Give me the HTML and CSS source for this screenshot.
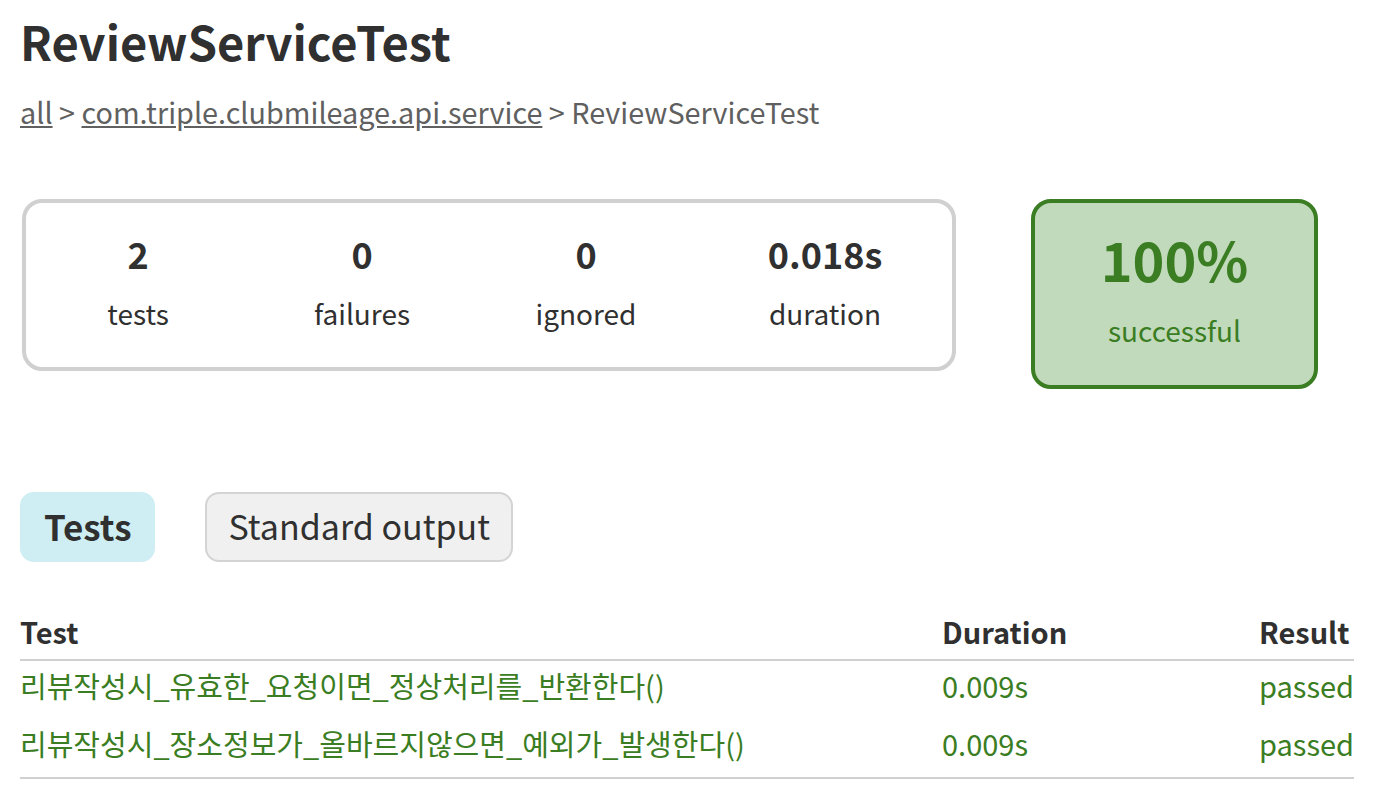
FILE: index.html
```html
<!DOCTYPE html>
<html lang="en">
<head>
<meta charset="utf-8">
<title>Test results - ReviewServiceTest</title>
<link rel="stylesheet" href="styles.css">
</head>
<body>
<div class="content">
  <h1 class="title">ReviewServiceTest</h1>
  <div class="breadcrumbs">
    <a href="#">all</a> &gt; <a href="#">com.triple.clubmileage.api.service</a> &gt; ReviewServiceTest
  </div>

  <div class="summary">
    <div class="summary-group">
      <div class="info-box info-tests">
        <div class="counter">2</div>
        <p class="label">tests</p>
      </div>
      <div class="info-box info-failures">
        <div class="counter">0</div>
        <p class="label">failures</p>
      </div>
      <div class="info-box info-ignored">
        <div class="counter">0</div>
        <p class="label">ignored</p>
      </div>
      <div class="info-box info-duration">
        <div class="counter">0.018s</div>
        <p class="label">duration</p>
      </div>
    </div>
    <div class="success-rate">
      <div class="percent">100%</div>
      <p class="label">successful</p>
    </div>
  </div>

  <ul class="tab-links">
    <li class="tab selected"><a href="#">Tests</a></li>
    <li class="tab"><a href="#">Standard output</a></li>
  </ul>

  <table class="tests-table">
    <colgroup>
      <col class="c-test">
      <col class="c-duration">
      <col class="c-result">
    </colgroup>
    <thead>
      <tr>
        <th class="col-test">Test</th>
        <th class="col-duration">Duration</th>
        <th class="col-result">Result</th>
      </tr>
    </thead>
    <tbody>
      <tr class="success">
        <td class="col-test name">리뷰작성시_유효한_요청이면_정상처리를_반환한다()</td>
        <td class="col-duration">0.009s</td>
        <td class="col-result">passed</td>
      </tr>
      <tr class="success">
        <td class="col-test name">리뷰작성시_장소정보가_올바르지않으면_예외가_발생한다()</td>
        <td class="col-duration">0.009s</td>
        <td class="col-result">passed</td>
      </tr>
    </tbody>
  </table>
</div>
</body>
</html>
```

FILE: styles.css
```css
html, body {
  margin: 0;
  padding: 0;
  background: #ffffff;
}

body {
  font-family: "Noto Sans CJK KR", "Noto Sans", sans-serif;
  font-size: 29px;
  color: #303030;
}

a, a:visited {
  color: #303030;
}

.content {
  padding: 0 20px;
}

.title {
  margin: 0;
  padding-top: 9px;
  font-size: 47px;
  line-height: 64px;
  font-weight: bold;
  white-space: nowrap;
}

.breadcrumbs {
  margin-top: 19px;
  line-height: 40px;
  font-size: 28.8px;
  color: #606060;
  white-space: nowrap;
}

.breadcrumbs a {
  color: #606060;
}

/* summary */
.summary {
  display: flex;
  align-items: flex-start;
  margin-top: 67px;
  margin-left: 2px;
}

.summary-group {
  display: flex;
  border: 4px solid #d0d0d0;
  border-radius: 20px;
  width: 934px;
  box-sizing: border-box;
}

.info-box {
  padding: 30px 0 32px;
  text-align: center;
  box-sizing: border-box;
}

.info-tests, .info-failures, .info-ignored {
  width: 224px;
}

.info-duration {
  width: 254px;
}

.counter {
  font-size: 36px;
  font-weight: bold;
  line-height: 40px;
  margin-bottom: 18px;
}

.label {
  margin: 0;
  font-size: 28px;
  line-height: 44px;
}

.success-rate {
  margin-left: 75px;
  width: 287px;
  height: 190px;
  box-sizing: border-box;
  border: 4px solid #3a7d22;
  border-radius: 20px;
  background: #c2dabc;
  color: #3a7d22;
  text-align: center;
  padding-top: 28px;
}

.percent {
  font-size: 54px;
  font-weight: bold;
  line-height: 56px;
  margin-bottom: 21px;
}

/* tabs */
.tab-links {
  display: flex;
  gap: 50px;
  list-style: none;
  margin: 103px 0 0 0;
  padding: 0;
}

.tab {
  border: 2px solid #d4d4d4;
  background: #f0f0f0;
  border-radius: 14px;
  padding: 0 21px 4px;
  height: 70px;
  box-sizing: border-box;
  display: flex;
  align-items: center;
}

.tab.selected {
  background: #ceeef3;
  border-color: #ceeef3;
  padding-left: 22px;
  padding-right: 22px;
}

.tab a {
  font-size: 34px;
  text-decoration: none;
  color: #303030;
  white-space: nowrap;
}

.tab.selected a {
  font-size: 35px;
  font-weight: bold;
}

/* table */
.tests-table {
  margin-top: 48px;
  border-collapse: collapse;
  table-layout: fixed;
  border-bottom: 2px solid #d0d0d0;
  width: 1334px;
}

.c-test { width: 730px; }
.c-duration { width: 317px; }
.c-result { width: 287px; }

.tests-table th {
  text-align: left;
  white-space: nowrap;
  font-weight: bold;
  line-height: 40px;
  padding: 1px 0 8px 192px;
  border-bottom: 2px solid #d0d0d0;
}

.tests-table td {
  white-space: nowrap;
  line-height: 38px;
  padding: 5px 0 15px 192px;
}

.tests-table .col-test {
  padding-left: 0;
}

.tests-table td.name {
  font-size: 29px;
}

.success td, .success a {
  color: #3a7d22;
}
```
